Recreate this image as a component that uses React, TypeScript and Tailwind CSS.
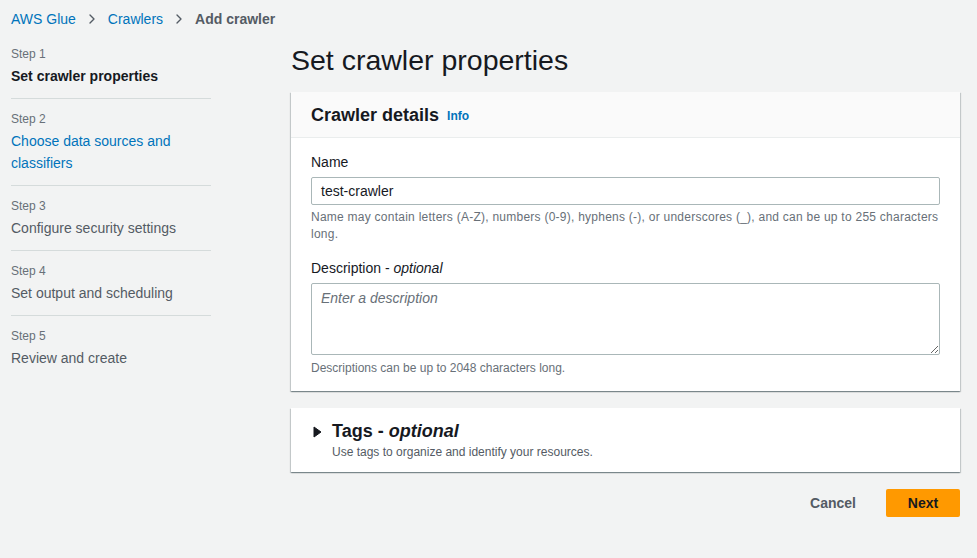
import { ChevronRight } from "lucide-react";

const steps = [
  { n: 1, label: "Set crawler properties", state: "active" },
  { n: 2, label: "Choose data sources and classifiers", state: "link" },
  { n: 3, label: "Configure security settings", state: "off" },
  { n: 4, label: "Set output and scheduling", state: "off" },
  { n: 5, label: "Review and create", state: "off" },
];

const panelShadow =
  "shadow-[0_1px_1px_0_rgba(0,28,36,0.3),1px_1px_1px_0_rgba(0,28,36,0.15),-1px_1px_1px_0_rgba(0,28,36,0.15)]";

export default function App() {
  return (
    <div className="min-h-[558px] bg-[#f2f3f3] font-['Liberation_Sans',Arial,sans-serif] text-[#16191f]">
      {/* Breadcrumbs */}
      <nav className="flex items-center h-[38px] px-[11px] text-[14px]">
        <span className="text-[#0073bb]">AWS Glue</span>
        <ChevronRight className="mx-[8px] h-[16px] w-[16px] text-[#545b64]" strokeWidth={2} />
        <span className="text-[#0073bb]">Crawlers</span>
        <ChevronRight className="mx-[8px] h-[16px] w-[16px] text-[#545b64]" strokeWidth={2} />
        <span className="font-bold text-[#545b64]">Add crawler</span>
      </nav>

      <div className="flex">
        {/* Wizard steps */}
        <aside className="w-[200px] ml-[11px] shrink-0">
          {steps.map((s, i) => (
            <div
              key={s.n}
              className={
                (i === 0 ? "pt-[7px] " : "pt-[11px] ") +
                "pb-[11px] " +
                (i < steps.length - 1 ? "border-b border-[#d5dbdb]" : "")
              }
            >
              <p className="text-[12px] leading-[18px] text-[#687078]">Step {s.n}</p>
              <p
                className={
                  "text-[14px] leading-[22px] mt-[2px] " +
                  (s.state === "active"
                    ? "font-bold text-[#16191f]"
                    : s.state === "link"
                    ? "text-[#0073bb] pr-[30px]"
                    : "text-[#545b64]")
                }
              >
                {s.label}
              </p>
            </div>
          ))}
        </aside>

        {/* Main */}
        <main className="flex-1 ml-[80px] mr-[17px]">
          <h1 className="text-[28.5px] leading-[36px] font-normal text-[#16191f] mt-[4px] mb-[14px]">
            Set crawler properties
          </h1>

          <section className={"bg-white " + panelShadow}>
            <div className="bg-[#fafafa] border-b border-[#eaeded] h-[46px] px-[20px] flex items-center">
              <h2 className="text-[18px] font-bold leading-[22px]">Crawler details</h2>
              <span className="ml-[8px] mt-[3px] text-[12px] font-bold text-[#0073bb]">Info</span>
            </div>
            <div className="px-[20px] pt-[14px] pb-[14px]">
              <label className="block text-[14px] leading-[20px] mb-[5px]">Name</label>
              <div className="h-[28px] border border-[#aab7b8] rounded-[2px] flex items-center px-[9px] text-[14px]">
                test-crawler
              </div>
              <p className="mt-[4px] text-[12px] leading-[17px] tracking-[0.25px] text-[#687078]">
                Name may contain letters (A-Z), numbers (0-9), hyphens (-), or underscores (_), and can be up to 255
                characters long.
              </p>

              <label className="block mt-[15px] text-[14px] leading-[20px] mb-[5px]">
                Description - <i>optional</i>
              </label>
              <textarea
                placeholder="Enter a description"
                className="block w-full h-[72px] border border-[#aab7b8] rounded-[2px] px-[9px] py-[4px] text-[14px] leading-[20px] placeholder:italic placeholder:text-[#687078] resize-y outline-none"
              />
              <p className="mt-[5px] text-[12px] leading-[17px] text-[#687078]">
                Descriptions can be up to 2048 characters long.
              </p>
            </div>
          </section>

          <section className={"mt-[17px] bg-white h-[64px] px-[22px] flex items-start pt-[12px] " + panelShadow}>
            <svg width="10" height="12" viewBox="0 0 10 12" className="mt-[6px] mr-[9px] shrink-0" aria-hidden="true">
              <path d="M1 1l7 5-7 5z" fill="#16191f" stroke="#16191f" strokeWidth="1" strokeLinejoin="round" />
            </svg>
            <div>
              <p className="text-[18px] font-bold leading-[22px]">
                Tags - <i>optional</i>
              </p>
              <p className="text-[12px] leading-[16px] text-[#545b64] mt-[2px]">
                Use tags to organize and identify your resources.
              </p>
            </div>
          </section>

          <div className="flex justify-end items-center mt-[17px] gap-[10px]">
            <button className="px-[20px] h-[28px] text-[14px] font-bold text-[#545b64]">Cancel</button>
            <button className="w-[74px] h-[28px] bg-[#ff9900] rounded-[2px] text-[14px] font-bold text-[#16191f]">
              Next
            </button>
          </div>
        </main>
      </div>
    </div>
  );
}
